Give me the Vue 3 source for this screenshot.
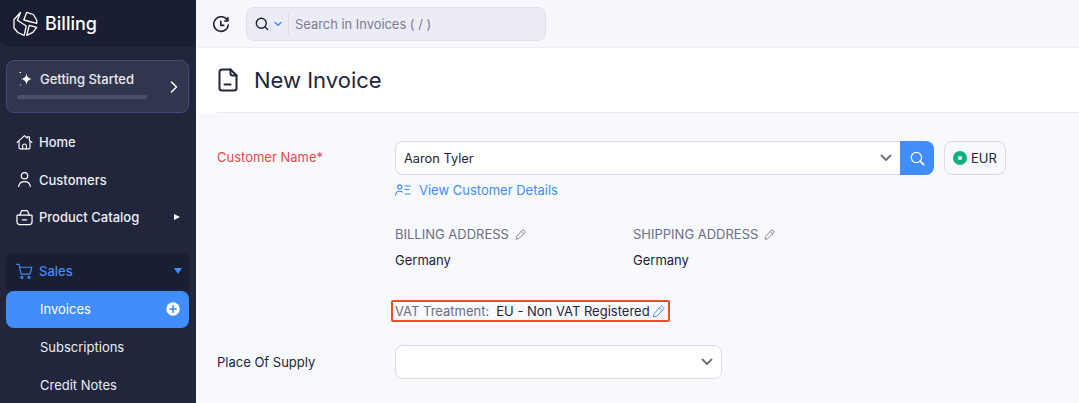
<script setup>
const navItems = [
  { label: 'Home', icon: 'home' },
  { label: 'Customers', icon: 'user' },
  { label: 'Product Catalog', icon: 'bag', arrow: true }
]
</script>

<template>
  <div class="app">
    <aside class="sidebar">
      <div class="brand">
        <svg class="logo" viewBox="0 0 25 25" fill="none" stroke="#fff" stroke-width="1.300" stroke-linejoin="round">
          <path d="M7.500 1 1 8v8.500l3.800 4.500 6.400 2.800 2-9.300-8.800-5.800L7.500 1Z"/>
          <path d="M13.700 .8 10.800 8.500l12.900 3.300V8.500L20.300 3l-6.600-2.200Z"/>
          <path d="m16.300 13.800 7.400 2-3.800 5-6.200 3 2.600-10Z"/>
        </svg>
        <span class="brand-name">Billing</span>
      </div>

      <div class="started">
        <div class="started-main">
          <div class="started-title">
            <svg class="spark" viewBox="0 0 16 16" fill="#fff">
              <path d="M8.500 2.200c.5 3.500 1.800 5 5.500 5.800-3.700.8-5 2.300-5.500 5.800C8 10.300 6.700 8.800 3 8c3.700-.8 5-2.300 5.500-5.800Z"/>
              <circle cx="2.300" cy="1.500" r=".8"/>
              <circle cx="2.500" cy="14" r=".6"/>
            </svg>
            <span>Getting Started</span>
          </div>
          <div class="progress"></div>
        </div>
        <svg class="started-chevron" viewBox="0 0 10 14" fill="none" stroke="#fff" stroke-width="1.500" stroke-linecap="round" stroke-linejoin="round">
          <path d="M2.500 2 7.500 7l-5 5"/>
        </svg>
      </div>

      <nav class="nav">
        <div v-for="item in navItems" :key="item.label" class="nav-row">
          <svg v-if="item.icon === 'home'" class="nav-icon" viewBox="0 0 18 18" fill="none" stroke="#fff" stroke-width="1.200" stroke-linejoin="round" stroke-linecap="round">
            <path d="M1.200 8.800 9 1.800l2.800 2.500V3h2.400v3.400l2.600 2.400"/>
            <path d="M3.200 7.800v6.700c0 .8.500 1.300 1.300 1.300h9c.8 0 1.300-.5 1.300-1.300V7.800"/>
            <path d="M7 15.800v-3.300c0-2.600 4-2.600 4 0v3.300"/>
          </svg>
          <svg v-else-if="item.icon === 'user'" class="nav-icon" viewBox="0 0 18 18" fill="none" stroke="#fff" stroke-width="1.300" stroke-linecap="round">
            <circle cx="9" cy="5" r="3.400"/>
            <path d="M2.800 16.200c.6-3.200 3-5 6.200-5s5.600 1.800 6.200 5"/>
          </svg>
          <svg v-else class="nav-icon" viewBox="0 0 18 18" fill="none" stroke="#fff" stroke-width="1.300" stroke-linecap="round" stroke-linejoin="round">
            <path d="M1.800 6.500h14.400c.5 0 .8.400.8.900v6.100c0 1.700-1.200 3-3 3H4c-1.800 0-3-1.300-3-3V7.400c0-.5.300-.9.800-.9Z"/>
            <path d="M3.800 6.500 6 1.800h6l2.200 4.700"/>
            <path d="M6.800 11.500h4.400"/>
          </svg>
          <span class="nav-label">{{ item.label }}</span>
          <span v-if="item.arrow" class="arrow-right"></span>
        </div>
      </nav>

      <div class="sales">
        <svg class="nav-icon" viewBox="0 0 18 18" fill="none" stroke="#408dfb" stroke-width="1.200" stroke-linecap="round" stroke-linejoin="round">
          <path d="M.8 1.500h2.400l2.200 10.300h9.400L16.800 4.500H3.800"/>
          <circle cx="6.200" cy="15.300" r="1.100"/>
          <circle cx="13.800" cy="15.300" r="1.100"/>
        </svg>
        <span class="nav-label">Sales</span>
        <span class="arrow-down"></span>
      </div>

      <div class="sub-active">
        <span>Invoices</span>
        <svg class="plus" viewBox="0 0 14 14">
          <circle cx="7" cy="7" r="6.700" fill="#fff"/>
          <path d="M7 3.800v6.400M3.800 7h6.400" stroke="#408dfb" stroke-width="1.600" stroke-linecap="round"/>
        </svg>
      </div>
      <div class="sub-row">Subscriptions</div>
      <div class="sub-row">Credit Notes</div>
    </aside>

    <main class="main">
      <header class="topbar">
        <svg class="history" viewBox="0 0 18 18" fill="none" stroke="#1f2233" stroke-width="1.600" stroke-linecap="round" stroke-linejoin="round">
          <path d="M15.500 4.600A7.300 7.300 0 1 0 16.300 9"/>
          <path d="M15.900 1.800v3.200h-3.200"/>
          <path d="M8.800 5.200v4.200h3"/>
        </svg>
        <div class="search">
          <svg class="search-icon" viewBox="0 0 14 14" fill="none" stroke="#1f2233" stroke-width="1.400" stroke-linecap="round">
            <circle cx="6.300" cy="6.300" r="5"/>
            <path d="m10 10 2.600 2.600"/>
          </svg>
          <svg class="search-caret" viewBox="0 0 8 6" fill="none" stroke="#408dfb" stroke-width="1.500" stroke-linecap="round" stroke-linejoin="round">
            <path d="m1 1.500 3 2.800 3-2.800"/>
          </svg>
          <span class="search-sep"></span>
          <span class="search-text">Search in Invoices ( / )</span>
        </div>
      </header>

      <div class="title-bar">
        <div class="title-inner">
          <svg class="doc" viewBox="0 0 20 24" fill="none" stroke="#21263c" stroke-width="2" stroke-linejoin="round" stroke-linecap="round">
            <path d="M12.500 1.500H4C2.500 1.500 1.500 2.500 1.500 4v16c0 1.500 1 2.500 2.500 2.500h12c1.500 0 2.500-1 2.500-2.500V7.500l-6-6Z"/>
            <path d="M12.500 1.500v4c0 1.300.7 2 2 2h4"/>
            <path d="M6.500 16.500h6"/>
          </svg>
          <h1>New Invoice</h1>
        </div>
      </div>

      <section class="form">
        <div class="form-row customer-row">
          <label class="label required">Customer Name*</label>
          <div class="field">
            <div class="customer-controls">
              <div class="select customer-select">
                <span>Aaron Tyler</span>
                <svg class="chev" viewBox="0 0 12 8" fill="none" stroke="#6e6e85" stroke-width="1.800" stroke-linecap="round" stroke-linejoin="round">
                  <path d="m1.500 1.500 4.500 4.500 4.500-4.500"/>
                </svg>
              </div>
              <button class="search-btn">
                <svg viewBox="0 0 14 14" fill="none" stroke="#fff" stroke-width="1.100" stroke-linecap="round">
                  <circle cx="6" cy="6" r="4.800"/>
                  <path d="m9.500 9.500 3.200 3.200" stroke-width="1.500"/>
                </svg>
              </button>
              <div class="currency">
                <svg class="coin" viewBox="0 0 14 14">
                  <circle cx="7" cy="7" r="7" fill="#12b07f"/>
                  <circle cx="7" cy="7" r="2" fill="#fff"/>
                </svg>
                <span>EUR</span>
              </div>
            </div>
            <a class="details-link">
              <svg viewBox="0 0 16 12" fill="none" stroke="#408dfb" stroke-width="1.100" stroke-linecap="round">
                <circle cx="4.700" cy="3" r="2.100"/>
                <path d="M.6 11c.2-2.400 1.800-3.800 4.100-3.800 1.200 0 2.100.3 2.800 1"/>
                <path d="M10 2h5.400M10 5.500h4M10 10h5.400"/>
              </svg>
              <span>View Customer Details</span>
            </a>
          </div>
        </div>

        <div class="address-row">
          <div class="address">
            <div class="address-head">
              <span>BILLING ADDRESS</span>
              <svg class="pencil" viewBox="0 0 12 12" fill="none" stroke="#6e6e85" stroke-width=".9" stroke-linejoin="round">
                <path d="M8 1.300c.5-.5 1.200-.5 1.700 0l1 1c.5.500.5 1.200 0 1.700l-6.500 6.500-3 .6.600-3L8 1.300Z"/>
                <path d="m7 2.500 2.500 2.700"/>
              </svg>
            </div>
            <div class="address-value">Germany</div>
          </div>
          <div class="address">
            <div class="address-head">
              <span>SHIPPING ADDRESS</span>
              <svg class="pencil" viewBox="0 0 12 12" fill="none" stroke="#6e6e85" stroke-width=".9" stroke-linejoin="round">
                <path d="M8 1.300c.5-.5 1.200-.5 1.700 0l1 1c.5.500.5 1.200 0 1.700l-6.500 6.500-3 .6.600-3L8 1.300Z"/>
                <path d="m7 2.500 2.500 2.700"/>
              </svg>
            </div>
            <div class="address-value">Germany</div>
          </div>
        </div>

        <div class="vat-wrap">
          <div class="vat">
            <span class="vat-label">VAT Treatment:</span>
            <span class="vat-value">EU - Non VAT Registered</span>
            <svg class="vat-pencil" viewBox="0 0 12 12" fill="none" stroke="#408dfb" stroke-width=".9" stroke-linejoin="round">
              <path d="M8 1.300c.5-.5 1.200-.5 1.700 0l1 1c.5.500.5 1.200 0 1.700l-6.500 6.500-3 .6.600-3L8 1.300Z"/>
              <path d="m7 2.500 2.500 2.700"/>
            </svg>
          </div>
        </div>

        <div class="form-row supply-row">
          <label class="label">Place Of Supply</label>
          <div class="select supply-select">
            <svg class="chev" viewBox="0 0 12 8" fill="none" stroke="#6e6e85" stroke-width="1.800" stroke-linecap="round" stroke-linejoin="round">
              <path d="m1.500 1.500 4.500 4.500 4.500-4.500"/>
            </svg>
          </div>
        </div>
      </section>
    </main>
  </div>
</template>

<style>
html, body { margin: 0; overflow: hidden; }
</style>

<style scoped>
.app {
  display: flex;
  width: 1079px;
  height: 403px;
  overflow: hidden;
  font-family: Inter, "Liberation Sans", sans-serif;
  font-size: 13px;
  color: #21263c;
  background: #f9f9fc;
}
.sidebar {
  flex: 0 0 196px;
  height: 403px;
  background: #21263c;
  color: #fff;
  overflow: hidden;
  box-sizing: border-box;
}
.brand {
  display: flex;
  align-items: center;
  height: 47px;
  padding-left: 13px;
  gap: 7px;
  background: #1a1e32;
  border-radius: 0 0 9px 9px;
}
.logo { width: 25px; height: 26px; }
.brand-name { font-size: 18px; font-weight: 500; color: #fff; }
.started {
  display: flex;
  align-items: center;
  justify-content: space-between;
  box-sizing: border-box;
  height: 53px;
  margin: 13px 7px 0 6px;
  padding: 0 9px 0 10px;
  background: #31364f;
  border: 1px solid #44497a;
  border-radius: 8px;
}
.started-main { width: 130px; margin-bottom: 3px; }
.started-title {
  display: flex;
  align-items: center;
  gap: 6px;
  margin-left: 1px;
  font-size: 13px;
  font-weight: 500;
  color: #e8e9ee;
}
.spark { width: 16px; height: 16px; flex: none; }
.progress {
  width: 130px;
  height: 4px;
  margin-top: 8px;
  background: #4b5167;
  border-radius: 2px;
}
.started-chevron { width: 10px; height: 14px; }
.nav { margin-top: 10.500px; }
.nav-row {
  display: flex;
  align-items: center;
  height: 37.500px;
  padding-left: 16px;
}
.nav-icon { width: 17px; height: 17px; flex: none; }
.nav-label { margin-left: 6px; font-size: 13px; font-weight: 500; color: #eceef2; }
.arrow-right {
  margin-left: auto;
  margin-right: 16px;
  border-left: 6px solid #fff;
  border-top: 3.500px solid transparent;
  border-bottom: 3.500px solid transparent;
}
.sales {
  display: flex;
  align-items: center;
  box-sizing: border-box;
  height: 37px;
  margin: 17px 7px 0 6px;
  padding: 0 0 1px 10px;
  background: #1a1e32;
  border-radius: 8px 8px 0 0;
}
.sales .nav-label { color: #408dfb; }
.arrow-down {
  margin-left: auto;
  margin-right: 7px;
  border-top: 6px solid #408dfb;
  border-left: 4px solid transparent;
  border-right: 4px solid transparent;
}
.sub-active {
  display: flex;
  align-items: center;
  justify-content: space-between;
  box-sizing: border-box;
  height: 37px;
  margin: 1px 7px 0 6px;
  padding: 0 9px 1px 34px;
  background: #408dfb;
  border-radius: 8px;
  font-weight: 400;
  color: #fff;
}
.plus { width: 14px; height: 14px; }
.sub-row {
  display: flex;
  align-items: center;
  height: 38px;
  padding-left: 40px;
  font-weight: 400;
  color: #eceef2;
}
.main { flex: 1; min-width: 0; display: flex; flex-direction: column; }
.topbar {
  display: flex;
  align-items: center;
  height: 48px;
  box-sizing: border-box;
  padding: 0 0 0 16px;
  background: #f7f7fd;
  border-bottom: 1px solid #eeeef4;
  flex: none;
}
.history { width: 18px; height: 18px; margin-top: 2px; flex: none; }
.search {
  display: flex;
  align-items: center;
  box-sizing: border-box;
  width: 300px;
  height: 34px;
  margin-left: 16px;
  padding-left: 8px;
  background: #ececf7;
  border: 1px solid #e0e0ec;
  border-radius: 8px;
}
.search-icon { width: 14px; height: 14px; flex: none; }
.search-caret { width: 8px; height: 6px; margin-left: 5px; flex: none; }
.search-sep { width: 1px; height: 24px; margin-left: 6px; background: #dedeea; }
.search-text { margin-left: 6px; padding-top: 1px; color: #7d7d92; font-size: 12.900px; }
.title-bar { height: 65px; background: #fff; padding-left: 21px; box-sizing: border-box; flex: none; }
.title-inner {
  display: flex;
  align-items: center;
  height: 65px;
  box-sizing: border-box;
  border-bottom: 1px solid #e9e9ef;
}
.doc { width: 20px; height: 24px; margin-left: 1px; flex: none; }
h1 { margin: 0 0 0 16px; font-size: 22px; font-weight: 400; color: #21263c; }
.form { flex: 1; padding: 28px 0 0 21px; background: #f8f9fc; }
.form-row { display: flex; }
.label { width: 178px; flex: none; font-size: 13px; }
.required { color: #e54b4b; padding-top: 8px; }
.field { flex: none; }
.customer-controls { display: flex; align-items: stretch; height: 34px; }
.select {
  display: flex;
  align-items: center;
  justify-content: space-between;
  box-sizing: border-box;
  background: #fff;
  border: 1px solid #dcdaea;
  font-size: 13px;
}
.customer-select {
  width: 505px;
  padding: 0 8px;
  border-right: 0;
  border-radius: 8px 0 0 8px;
}
.customer-select span { font-size: 12.800px; }
.chev { width: 12px; height: 8px; margin-left: auto; }
.search-btn {
  display: flex;
  align-items: center;
  justify-content: center;
  width: 34px;
  padding: 0;
  border: 0;
  background: #408dfb;
  border-radius: 0 8px 8px 0;
}
.search-btn svg { width: 15px; height: 15px; }
.currency {
  display: flex;
  align-items: center;
  gap: 4px;
  box-sizing: border-box;
  width: 62px;
  margin-left: 10px;
  padding-left: 8px;
  border: 1px solid #dcdaea;
  border-radius: 8px;
  font-size: 13px;
}
.coin { width: 14px; height: 14px; }
.details-link {
  display: flex;
  align-items: center;
  gap: 8px;
  margin-top: 7px;
  color: #408dfb;
  font-size: 13px;
  line-height: 16px;
}
.details-link svg { width: 16px; height: 12px; }
.address-row { display: flex; margin: 28px 0 0 178px; }
.address { width: 238px; }
.address-head {
  display: flex;
  align-items: center;
  gap: 6px;
  color: #6e6e85;
  font-size: 13px;
  line-height: 16px;
}
.pencil { width: 11px; height: 11px; }
.address-value { margin-top: 10px; font-size: 13px; line-height: 16px; }
.vat-wrap { margin: 32px 0 0 174px; }
.vat {
  display: inline-flex;
  align-items: center;
  box-sizing: border-box;
  width: 279px;
  height: 22px;
  padding-left: 2px;
  border: 2px solid #ef4b2c;
  border-radius: 2px;
  font-size: 13px;
  white-space: nowrap;
}
.vat-label { color: #6e6e85; }
.vat-value { margin-left: 7px; }
.vat-pencil { width: 13px; height: 13px; margin-left: 2px; }
.supply-row { margin-top: 23px; align-items: center; }
.supply-select {
  width: 327px;
  height: 34px;
  padding: 0 8px;
  border-radius: 8px;
}
</style>
